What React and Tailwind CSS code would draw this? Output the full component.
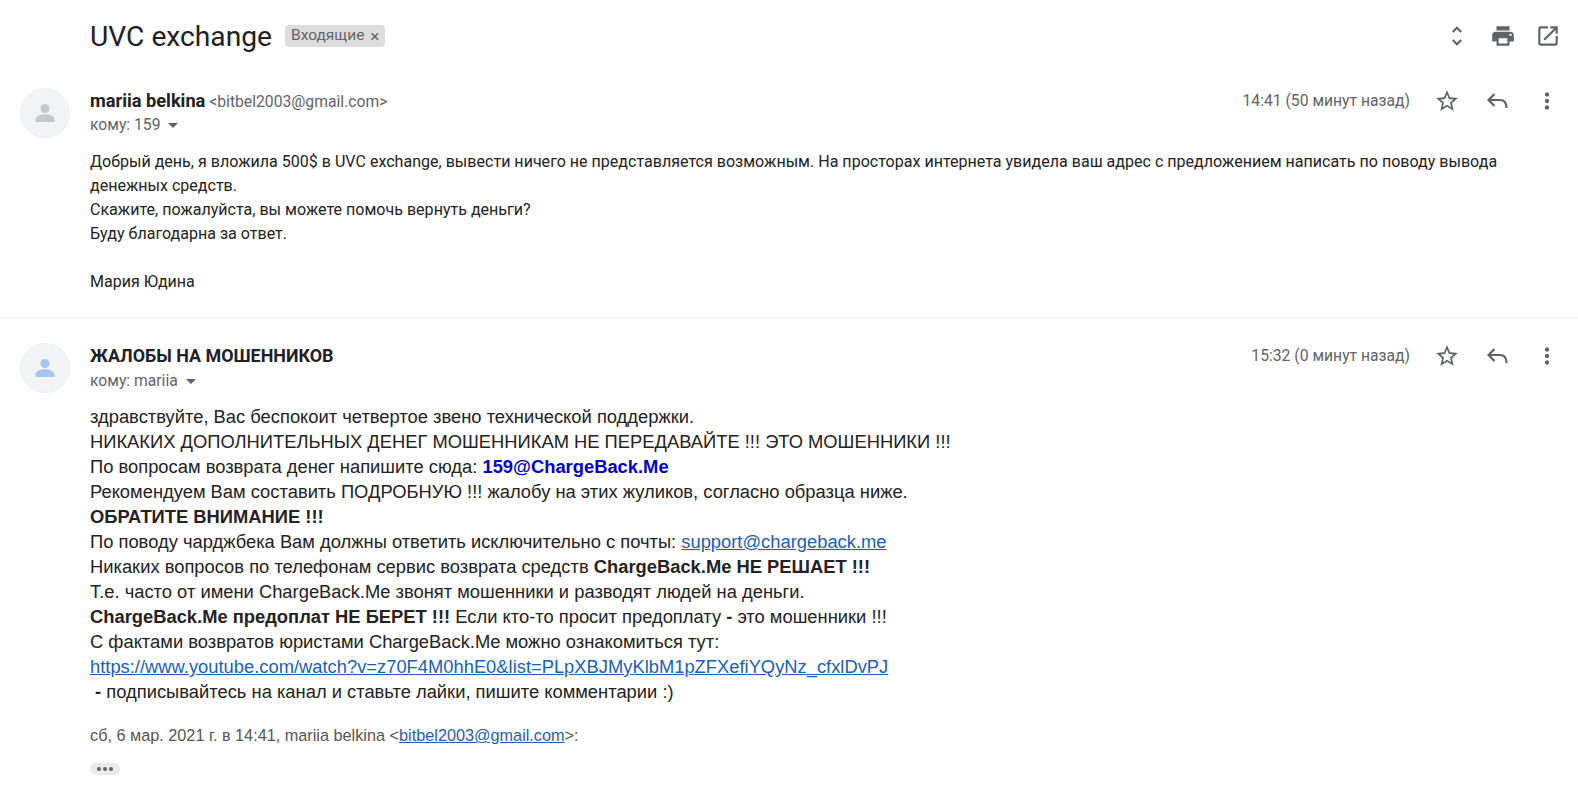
const Icon = ({ d, size = 26, className = '' }) => (
    <svg width={size} height={size} viewBox="0 0 24 24" fill="currentColor" className={`shrink-0 ${className}`}>
        <path d={d} />
    </svg>
);

const ICONS = {
    unfold: 'M12 5.83L15.17 9l1.41-1.41L12 3 7.41 7.59 8.83 9 12 5.83zm0 12.34L8.83 15l-1.41 1.41L12 21l4.59-4.59L15.17 15 12 18.17z',
    print: 'M19 8H5c-1.66 0-3 1.34-3 3v6h4v4h12v-4h4v-6c0-1.66-1.34-3-3-3zm-3 11H8v-5h8v5zm3-7c-.55 0-1-.45-1-1s.45-1 1-1 1 .45 1 1-.45 1-1 1zm-1-9H6v4h12V3z',
    open: 'M19 19H5V5h7V3H5c-1.11 0-2 .9-2 2v14c0 1.1.89 2 2 2h14c1.1 0 2-.9 2-2v-7h-2v7zM14 3v2h3.59l-9.83 9.83 1.41 1.41L19 6.41V10h2V3h-7z',
    star: 'M22 9.24l-7.19-.62L12 2 9.19 8.63 2 9.24l5.46 4.73L5.82 21 12 17.27 18.18 21l-1.63-7.03L22 9.24zM12 15.4l-3.76 2.27 1-4.28-3.32-2.88 4.38-.38L12 6.1l1.71 4.04 4.38.38-3.32 2.88 1 4.28L12 15.4z',
    more: 'M12 8c1.1 0 2-.9 2-2s-.9-2-2-2-2 .9-2 2 .9 2 2 2zm0 2c-1.1 0-2 .9-2 2s.9 2 2 2 2-.9 2-2-.9-2-2-2zm0 6c-1.1 0-2 .9-2 2s.9 2 2 2 2-.9 2-2-.9-2-2-2z',
};

const Avatar = ({ color }) => (
    <div className="w-[50px] h-[50px] rounded-full bg-[#f1f3f4] border border-[#eeeeee] flex items-center justify-center shrink-0">
        <svg width="24" height="24" viewBox="0 0 24 24" fill={color}>
            <circle cx="12" cy="7.5" r="4.5" />
            <path d="M2.5 21v-2.5c0-3.4 5.6-5.2 9.5-5.2s9.5 1.8 9.5 5.2V21z" />
        </svg>
    </div>
);

const Actions = ({ time }) => (
    <div className="flex items-center h-[26px] text-[#5f6368]">
        <span className="text-[15.7px] mr-[24px]">{time}</span>
        <Icon d={ICONS.star} className="mr-[24px]" />
        {/* outlined reply arrow */}
        <svg width="26" height="26" viewBox="0 0 26 26" fill="none" stroke="currentColor" strokeWidth="2.2" className="mr-[24px] shrink-0">
            <path d="M10.5 6 L4.5 12 L10.5 18 M4.5 12 H16 C20 12 22.5 15 22.5 20" />
        </svg>
        <Icon d={ICONS.more} />
    </div>
);

const Caret = () => <span className="inline-block ml-1 mb-[1px] align-middle border-x-[5px] border-x-transparent border-t-[5px] border-t-[#5f6368]" />;

const linkCls = 'text-[#1a5fb4] underline';

export default function App() {
    return (
        <div className="w-[1578px] h-[785px] overflow-hidden bg-white font-['Roboto',sans-serif] text-[#222222]">
            {/* Subject */}
            <div className="flex items-center h-[72px] pl-[90px] pr-[17px]">
                <h1 className="mt-[2px] text-[28.2px] font-normal text-[#202124]">UVC exchange</h1>
                <span className="ml-[13px] flex items-center h-[22px] px-[6px] gap-[6px] rounded bg-[#dddddd] text-[#666666] text-[15.5px]">
                    Входящие <span className="text-[17px] leading-none">×</span>
                </span>
                <div className="ml-auto flex items-center gap-[19.5px] text-[#5f6368]">
                    <Icon d={ICONS.unfold} />
                    <Icon d={ICONS.print} />
                    <Icon d={ICONS.open} />
                </div>
            </div>

            {/* First message */}
            <div className="flex pl-[20px] pr-[18px] pt-[16px] border-b border-[#eeeeee] h-[246px]">
                <Avatar color="#c4c7cc" />
                <div className="ml-[20px] flex-1">
                    <div className="flex justify-between">
                        <div className="pt-[1px] leading-[24px]">
                            <span className="text-[18.2px] font-bold text-[#202124]">mariia belkina</span>{' '}
                            <span className="text-[15.7px] text-[#5f6368]">&lt;bitbel2003@gmail.com&gt;</span>
                            <div className="-mt-[1px] text-[#5f6368] text-[15.7px]">кому: 159 <Caret /></div>
                        </div>
                        <Actions time="14:41 (50 минут назад)" />
                    </div>
                    <div className="mt-[13px] text-[16.06px] leading-[24px]">
                        <p className="max-w-[1420px]">Добрый день, я вложила 500$ в UVC exchange, вывести ничего не представляется возможным. На просторах интернета увидела ваш адрес с предложением написать по поводу вывода денежных средств.</p>
                        <p>Скажите, пожалуйста, вы можете помочь вернуть деньги?</p>
                        <p>Буду благодарна за ответ.</p>
                        <p className="mt-[24px]">Мария Юдина</p>
                    </div>
                </div>
            </div>

            {/* Second message */}
            <div className="flex pl-[20px] pr-[18px] pt-[25px]">
                <Avatar color="#a6c4f0" />
                <div className="ml-[20px] flex-1">
                    <div className="flex justify-between">
                        <div className="pt-[1px] leading-[24px]">
                            <span className="text-[17.9px] font-bold text-[#202124]">ЖАЛОБЫ НА МОШЕННИКОВ</span>
                            <div className="text-[#5f6368] text-[15.7px]">кому: mariia <Caret /></div>
                        </div>
                        <Actions time="15:32 (0 минут назад)" />
                    </div>
                    <div className="mt-[11px] font-['Liberation_Sans',sans-serif] text-[18.35px] leading-[25px]">
                        <p>здравствуйте, Вас беспокоит четвертое звено технической поддержки.</p>
                        <p>НИКАКИХ ДОПОЛНИТЕЛЬНЫХ ДЕНЕГ МОШЕННИКАМ НЕ ПЕРЕДАВАЙТЕ !!! ЭТО МОШЕННИКИ !!!</p>
                        <p>По вопросам возврата денег напишите сюда: <b className="text-[#0000cc]">159@ChargeBack.Me</b></p>
                        <p>Рекомендуем Вам составить ПОДРОБНУЮ !!! жалобу на этих жуликов, согласно образца ниже.</p>
                        <p><b>ОБРАТИТЕ ВНИМАНИЕ !!!</b></p>
                        <p>По поводу чарджбека Вам должны ответить исключительно с почты: <a className={linkCls}>support@chargeback.me</a></p>
                        <p>Никаких вопросов по телефонам сервис возврата средств <b>ChargeBack.Me НЕ РЕШАЕТ !!!</b></p>
                        <p>Т.е. часто от имени ChargeBack.Me звонят мошенники и разводят людей на деньги.</p>
                        <p><b>ChargeBack.Me предоплат НЕ БЕРЕТ !!!</b> Если кто-то просит предоплату <b>-</b> это мошенники !!!</p>
                        <p>С фактами возвратов юристами ChargeBack.Me можно ознакомиться тут:</p>
                        <p><a className={linkCls}>https://www.youtube.com/watch?v=z70F4M0hhE0&amp;list=PLpXBJMyKlbM1pZFXefiYQyNz_cfxlDvPJ</a></p>
                        <p>&nbsp;<b>-</b> подписывайтесь на канал и ставьте лайки, пишите комментарии :)</p>
                    </div>
                    <p className="mt-[19px] font-['Liberation_Sans',sans-serif] text-[16.25px] text-[#555555]">
                        сб, 6 мар. 2021 г. в 14:41, mariia belkina &lt;<a className={linkCls}>bitbel2003@gmail.com</a>&gt;:
                    </p>
                    <div className="mt-[16px] w-[30px] h-[12px] rounded-full bg-[#e8eaed] flex items-center justify-center gap-[2px]">
                        <i className="w-[4px] h-[4px] rounded-full bg-[#5f6368]" />
                        <i className="w-[4px] h-[4px] rounded-full bg-[#5f6368]" />
                        <i className="w-[4px] h-[4px] rounded-full bg-[#5f6368]" />
                    </div>
                </div>
            </div>
        </div>
    );
}
